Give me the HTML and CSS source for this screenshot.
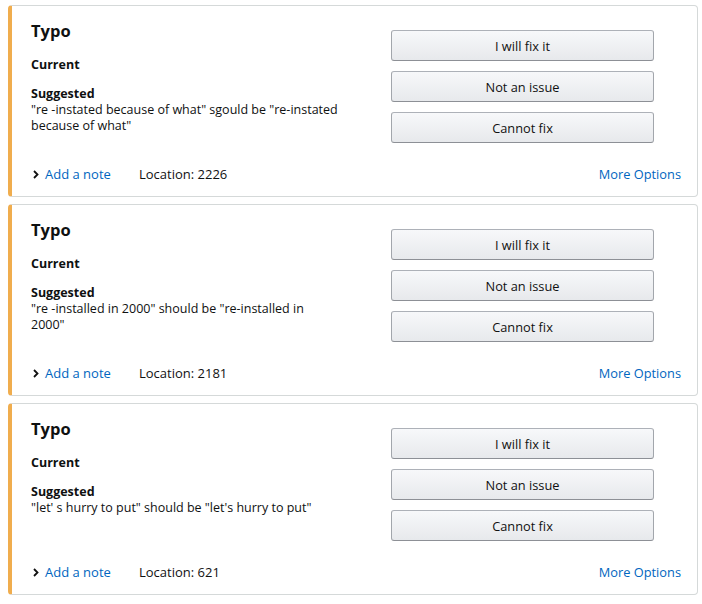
FILE: index.html
```html
<!DOCTYPE html>
<html>
<head>
<meta charset="utf-8">
<link rel="stylesheet" href="styles.css">
</head>
<body>
<div class="list">
  <div class="card">
    <div class="top">
      <div class="info">
        <div class="title">Typo</div>
        <div class="label current">Current</div>
        <div class="label">Suggested</div>
        <div class="text">"re -instated because of what" sgould be "re-instated because of what"</div>
      </div>
      <div class="actions">
        <button class="btn">I will fix it</button>
        <button class="btn">Not an issue</button>
        <button class="btn">Cannot fix</button>
      </div>
    </div>
    <div class="foot">
      <div class="foot-left">
        <a class="note"><svg class="chev" width="6" height="9" viewBox="0 0 6 9"><path d="M1 1 L4.5 4.5 L1 8" fill="none" stroke="#111" stroke-width="1.8"/></svg>Add a note</a>
        <span class="loc">Location: 2226</span>
      </div>
      <a class="more">More Options</a>
    </div>
  </div>
  <div class="card">
    <div class="top">
      <div class="info">
        <div class="title">Typo</div>
        <div class="label current">Current</div>
        <div class="label">Suggested</div>
        <div class="text">"re -installed in 2000" should be "re-installed in 2000"</div>
      </div>
      <div class="actions">
        <button class="btn">I will fix it</button>
        <button class="btn">Not an issue</button>
        <button class="btn">Cannot fix</button>
      </div>
    </div>
    <div class="foot">
      <div class="foot-left">
        <a class="note"><svg class="chev" width="6" height="9" viewBox="0 0 6 9"><path d="M1 1 L4.5 4.5 L1 8" fill="none" stroke="#111" stroke-width="1.8"/></svg>Add a note</a>
        <span class="loc">Location: 2181</span>
      </div>
      <a class="more">More Options</a>
    </div>
  </div>
  <div class="card">
    <div class="top">
      <div class="info">
        <div class="title">Typo</div>
        <div class="label current">Current</div>
        <div class="label">Suggested</div>
        <div class="text">"let' s hurry to put" should be "let's hurry to put"</div>
      </div>
      <div class="actions">
        <button class="btn">I will fix it</button>
        <button class="btn">Not an issue</button>
        <button class="btn">Cannot fix</button>
      </div>
    </div>
    <div class="foot">
      <div class="foot-left">
        <a class="note"><svg class="chev" width="6" height="9" viewBox="0 0 6 9"><path d="M1 1 L4.5 4.5 L1 8" fill="none" stroke="#111" stroke-width="1.8"/></svg>Add a note</a>
        <span class="loc">Location: 621</span>
      </div>
      <a class="more">More Options</a>
    </div>
  </div>
</div>
</body>
</html>
```
FILE: styles.css
```css
html, body {
  margin: 0;
  padding: 0;
  background: #fff;
}
body {
  font-family: "Open Sans", "Noto Sans", sans-serif;
  font-size: 13px;
  line-height: 16px;
  color: #0f1111;
}
.list {
  padding: 5px 4px 0 8px;
  display: flex;
  flex-direction: column;
  gap: 7px;
}
.card {
  height: 192px;
  box-sizing: border-box;
  border: 1px solid #d5d9d9;
  border-left: 4px solid #f0ad4e;
  border-radius: 4px;
  padding: 13px 16px 14px 19px;
  display: flex;
  flex-direction: column;
}
.top {
  display: flex;
  flex: 1;
}
.info {
  width: 307px;
}
.title {
  font-size: 16.5px;
  font-weight: 700;
  line-height: 24px;
}
.label {
  font-weight: 700;
  font-size: 12.5px;
  margin-top: 14px;
}
.current {
  margin-top: 14px;
  margin-bottom: -1px;
}
.text {
  font-size: 12.5px;
}
.actions {
  margin-left: 53px;
  margin-top: 11px;
  display: flex;
  flex-direction: column;
  gap: 10px;
}
.btn {
  width: 263px;
  height: 31px;
  box-sizing: border-box;
  border: 1px solid #a2a6ac;
  border-color: #adb1b8 #a2a6ac #8d9096;
  border-radius: 3px;
  background: linear-gradient(to bottom, #f7f8fa, #e7e9ec);
  font-family: inherit;
  font-size: 12.8px;
  color: #111;
  padding: 0;
}
.foot {
  display: flex;
  justify-content: space-between;
  align-items: center;
}
.foot-left {
  display: flex;
  align-items: center;
}
.note {
  color: #0066c0;
  display: flex;
  align-items: center;
  width: 108px;
}
.chev {
  margin: 0 6px 0 2px;
}
.loc {
  color: #111;
}
.more {
  color: #0066c0;
  font-size: 12.8px;
}
```
